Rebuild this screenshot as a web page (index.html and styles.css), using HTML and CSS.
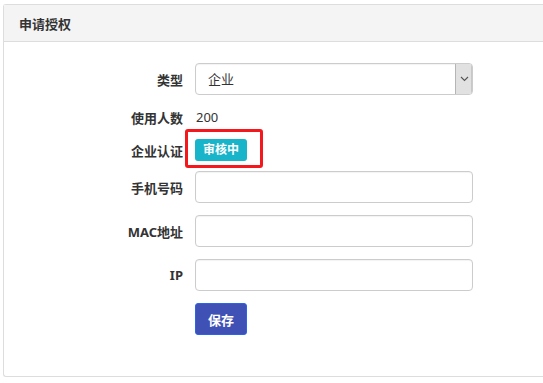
FILE: index.html
```html
<!DOCTYPE html>
<html lang="zh-CN">
<head>
    <meta charset="UTF-8">
    <meta name="viewport" content="width=device-width, initial-scale=1.0">
    <title>申请授权</title>
    <link rel="stylesheet" href="styles.css">
</head>
<body>
    <div class="panel">
        <div class="panel-heading">申请授权</div>
        <div class="panel-body">
            <div class="form-row">
                <label>类型</label>
                <div class="select">
                    <span class="select-value">企业</span>
                    <span class="select-arrow">
                        <svg width="9" height="6" viewBox="0 0 9 6"><path d="M1 1 L4.5 4.5 L8 1" fill="none" stroke="#555" stroke-width="1.1"/></svg>
                    </span>
                </div>
            </div>
            <div class="form-row row-static">
                <label>使用人数</label>
                <span class="static-value">200</span>
            </div>
            <div class="form-row row-static">
                <label>企业认证</label>
                <div class="control-static">
                    <span class="badge">审核中</span>
                    <span class="mark"></span>
                </div>
            </div>
            <div class="form-row">
                <label>手机号码</label>
                <input type="text" class="input">
            </div>
            <div class="form-row">
                <label>MAC地址</label>
                <input type="text" class="input">
            </div>
            <div class="form-row">
                <label>IP</label>
                <input type="text" class="input">
            </div>
            <div class="form-row">
                <span></span>
                <div><button class="btn">保存</button></div>
            </div>
        </div>
    </div>
</body>
</html>
```

FILE: styles.css
```css
* {
    margin: 0;
    padding: 0;
    box-sizing: border-box;
}

body {
    font-family: "Noto Sans", "Noto Sans CJK SC", sans-serif;
    font-size: 13px;
    color: #333;
    background-color: #fff;
    padding: 4px 0 0 3px;
}

.panel {
    border: 1px solid #ddd;
    border-right: none;
    border-radius: 3px 0 0 3px;
    height: 373px;
}

.panel-heading {
    background-color: #f4f4f4;
    border-bottom: 1px solid #ddd;
    height: 37px;
    line-height: 38px;
    padding-left: 15px;
    font-weight: bold;
    font-size: 13px;
}

.panel-body {
    padding-top: 21px;
    display: flex;
    flex-direction: column;
    gap: 12px;
}

.form-row {
    display: grid;
    grid-template-columns: 179px 278px;
    column-gap: 12px;
    align-items: center;
    height: 32px;
}

.form-row.row-static {
    height: 20px;
}

.form-row label {
    text-align: right;
    font-weight: bold;
    white-space: nowrap;
}

.select {
    display: flex;
    height: 32px;
    border: 1px solid #ccc;
    border-radius: 4px;
    overflow: hidden;
    box-shadow: inset 0 1px 1px rgba(0,0,0,0.05);
}

.select-value {
    flex: 1;
    line-height: 30px;
    padding-left: 12px;
}

.select-arrow {
    width: 17px;
    background-color: #e1e1e1;
    border-left: 1px solid #b5b5b5;
    display: flex;
    align-items: center;
    justify-content: center;
    box-shadow: inset -1px 0 0 #c8c8c8;
}

.static-value {
    padding-left: 1px;
    font-size: 13px;
}

.control-static {
    position: relative;
    display: flex;
    align-items: center;
}

.badge {
    display: inline-block;
    background-color: #17b4ca;
    color: #fff;
    font-size: 12px;
    font-weight: bold;
    height: 22px;
    line-height: 22px;
    padding: 0 8px;
    border-radius: 3px;
}

.mark {
    position: absolute;
    left: -10px;
    top: -10px;
    width: 78px;
    height: 39px;
    border: 3px solid #f4181c;
    border-radius: 3px;
}

.input {
    height: 32px;
    width: 100%;
    border: 1px solid #ccc;
    border-radius: 4px;
    padding: 0 12px;
    font-family: inherit;
    font-size: 13px;
    box-shadow: inset 0 1px 1px rgba(0,0,0,0.05);
}

.btn {
    height: 32px;
    padding: 0 12px;
    background-color: #3f51b5;
    border: 1px solid #2d62f0;
    border-radius: 3px;
    color: #fff;
    font-family: inherit;
    font-size: 13px;
    font-weight: bold;
    cursor: pointer;
}
```
